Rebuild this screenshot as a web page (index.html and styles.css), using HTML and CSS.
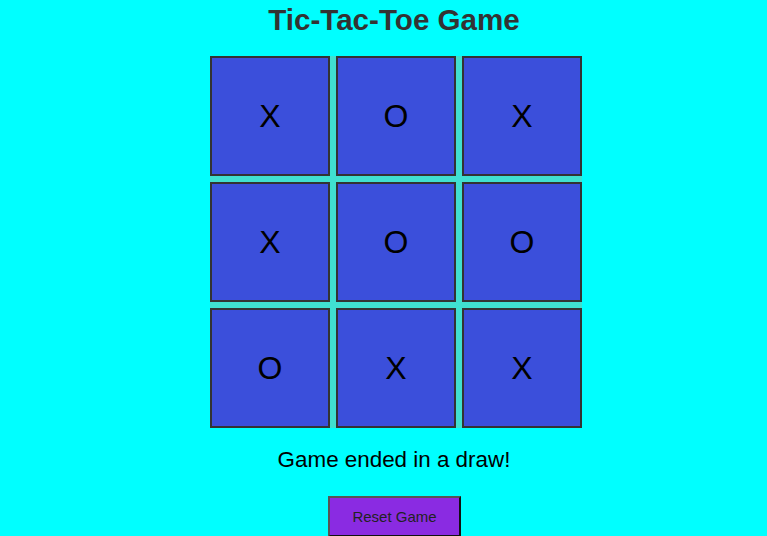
FILE: index.html
```html
<!DOCTYPE html>
<html lang="en">
<head>
<meta charset="utf-8">
<title>Tic-Tac-Toe Game</title>
<link rel="stylesheet" href="styles.css">
</head>
<body>
<main class="page">
  <h1 class="title">Tic-Tac-Toe Game</h1>
  <div class="board">
    <div class="cell">X</div>
    <div class="cell">O</div>
    <div class="cell">X</div>
    <div class="cell">X</div>
    <div class="cell">O</div>
    <div class="cell">O</div>
    <div class="cell">O</div>
    <div class="cell">X</div>
    <div class="cell">X</div>
  </div>
  <p class="status">Game ended in a draw!</p>
  <button class="reset">Reset Game</button>
</main>
</body>
</html>
```
FILE: styles.css
```css
html, body {
  margin: 0;
  padding: 0;
  background: #00ffff;
  height: 100%;
  overflow: hidden;
}

body {
  font-family: "Liberation Sans", Arial, sans-serif;
}

.page {
  display: flex;
  flex-direction: column;
  align-items: center;
  padding-left: 25px;
}

.title {
  margin: 3px 4px 19px 0;
  font-size: 29.6px;
  font-weight: bold;
  color: #333333;
  line-height: normal;
}

.board {
  display: grid;
  grid-template-columns: repeat(3, 120px);
  grid-template-rows: repeat(3, 120px);
  gap: 6px;
  background: #40e0d0;
}

.cell {
  box-sizing: border-box;
  display: flex;
  align-items: center;
  justify-content: center;
  background: #3b4fdb;
  border: 2px solid #333333;
  font-size: 32px;
  color: #000000;
}

.status {
  margin: 19px 4px 23px 0;
  font-size: 22.4px;
  color: #000000;
  line-height: normal;
}

.reset {
  font-family: "Liberation Sans", Arial, sans-serif;
  font-size: 15px;
  line-height: normal;
  padding: 10px 22.5px;
  margin-right: 3px;
  background: #8a2be2;
  color: #222222;
  border-style: solid;
  border-width: 2px;
  border-color: #555555 #111111 #111111 #555555;
  border-radius: 0;
}
```
